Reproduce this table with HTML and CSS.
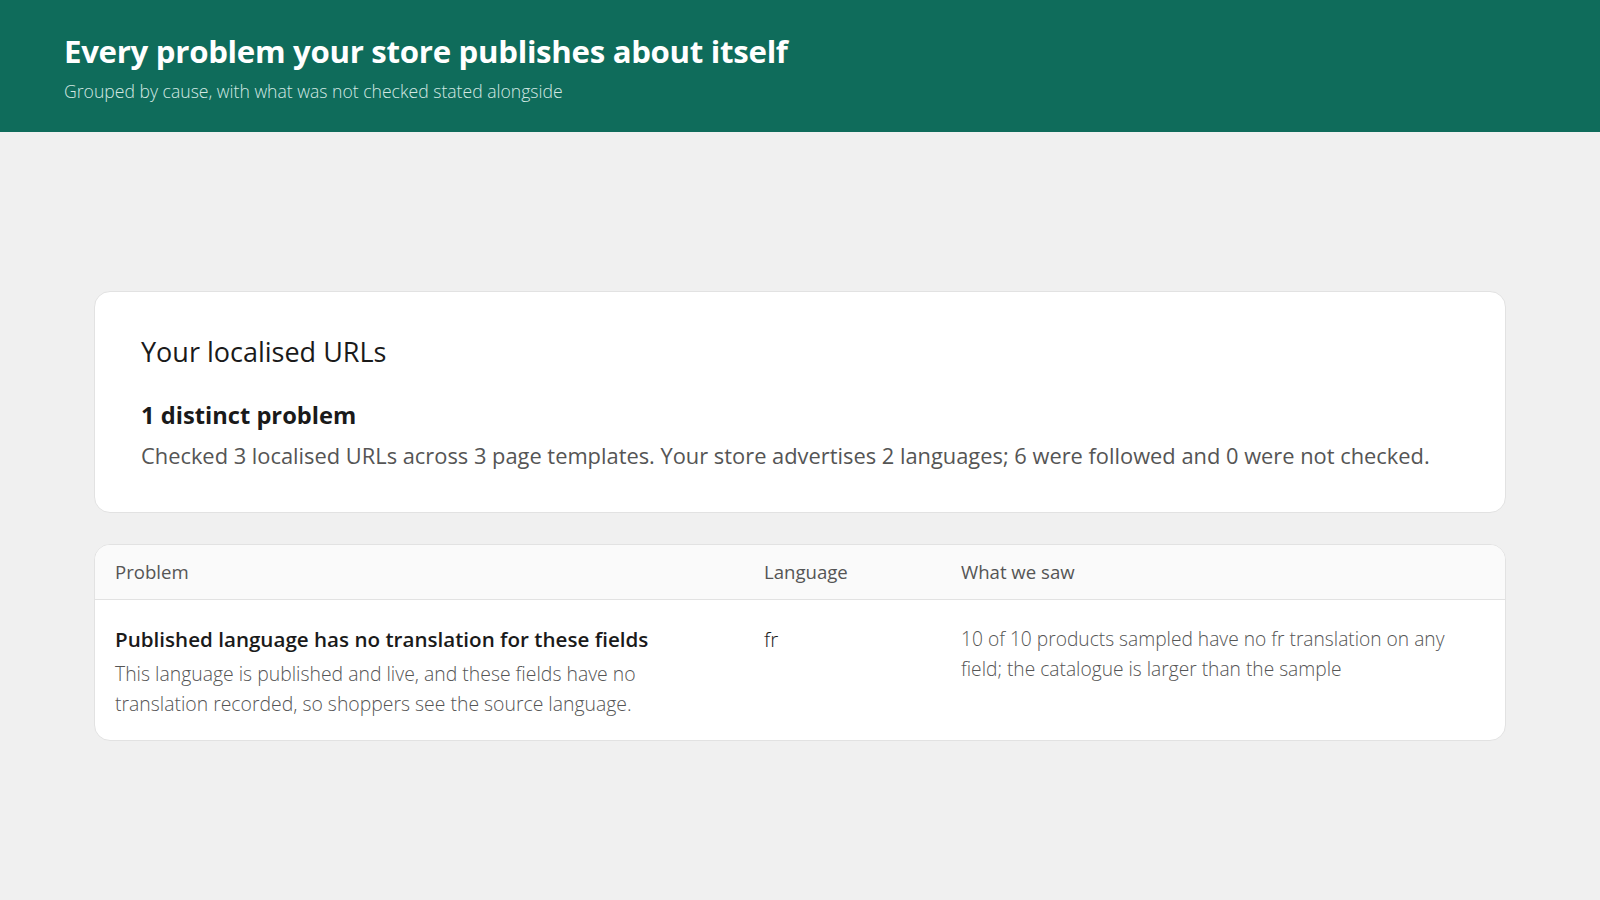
FILE: index.html
```html
<!DOCTYPE html>
<html lang="en">
<head>
<meta charset="utf-8">
<title>Every problem your store publishes about itself</title>
<link rel="stylesheet" href="styles.css">
</head>
<body>
<header class="top">
  <h1 class="top-title">Every problem your store publishes about itself</h1>
  <p class="top-sub">Grouped by cause, with what was not checked stated alongside</p>
</header>
<main class="main">
  <section class="card summary">
    <h2 class="summary-title">Your localised URLs</h2>
    <h3 class="summary-count">1 distinct problem</h3>
    <p class="summary-text">Checked 3 localised URLs across 3 page templates. Your store advertises 2 languages; 6 were followed and 0 were not checked.</p>
  </section>
  <section class="card table-card">
    <table class="issues">
      <colgroup>
        <col class="c-problem">
        <col class="c-lang">
        <col class="c-saw">
      </colgroup>
      <thead>
        <tr><th>Problem</th><th>Language</th><th>What we saw</th></tr>
      </thead>
      <tbody>
        <tr>
          <td>
            <div class="issue-title">Published language has no translation for these fields</div>
            <div class="issue-desc">This language is published and live, and these fields have no translation recorded, so shoppers see the source language.</div>
          </td>
          <td class="lang">fr</td>
          <td class="saw">10 of 10 products sampled have no fr translation on any field; the catalogue is larger than the sample</td>
        </tr>
      </tbody>
    </table>
  </section>
</main>
</body>
</html>
```
FILE: styles.css
```css
* { box-sizing: border-box; }
html, body { height: 100%; }
body {
  margin: 0;
  background: #f0f0f0;
  font-family: "Open Sans", "Noto Sans", "Liberation Sans", sans-serif;
  color: #1a1a1a;
  display: flex;
  flex-direction: column;
}
.top {
  background: #0f6c5b;
  color: #fff;
  padding: 31px 64px 0;
  height: 132px;
  flex: none;
}
.top-title {
  margin: 0;
  font-size: 31.2px;
  font-weight: 700;
  line-height: 40px;
  letter-spacing: -0.3px;
}
.top-sub {
  margin: 8px 0 0;
  font-size: 17.6px;
  font-weight: 300;
  line-height: 24px;
  color: #d4e8e3;
}
.main {
  flex: 1;
  display: flex;
  flex-direction: column;
  justify-content: center;
  align-items: center;
  gap: 31px;
}
.card {
  width: 1412px;
  background: #fff;
  border: 1px solid #e2e2e2;
  border-radius: 16px;
}
.summary {
  padding: 42px 46px 40px;
}
.summary-title {
  margin: 0;
  font-size: 27px;
  font-weight: 400;
  line-height: 36px;
}
.summary-count {
  margin: 29px 0 0;
  font-size: 23.7px;
  font-weight: 700;
  line-height: 32px;
}
.summary-text {
  margin: 9px 0 0;
  font-size: 21.85px;
  line-height: 32px;
  color: #555;
}
.table-card { overflow: hidden; }
.issues {
  width: 100%;
  border-collapse: collapse;
  table-layout: fixed;
}
.c-problem { width: 649px; }
.c-lang { width: 197px; }
.issues th {
  background: #fafafa;
  border-bottom: 1px solid #e2e2e2;
  text-align: left;
  font-weight: 400;
  font-size: 18.6px;
  color: #555;
  padding: 15px 20px;
  line-height: 24px;
}
.issues td {
  vertical-align: top;
  padding: 24px 20px 21px;
}
.issue-title {
  font-size: 20.6px;
  font-weight: 600;
  line-height: 30px;
}
.issue-desc {
  margin-top: 5px;
  max-width: 540px;
  font-size: 19.4px;
  line-height: 30px;
  color: #555;
  font-weight: 300;
}
.lang {
  font-size: 20.6px;
  line-height: 30px;
  font-weight: 300;
  color: #1a1a1a;
}
.saw {
  font-size: 19.2px;
  line-height: 30px;
  color: #555;
  font-weight: 300;
}
```
